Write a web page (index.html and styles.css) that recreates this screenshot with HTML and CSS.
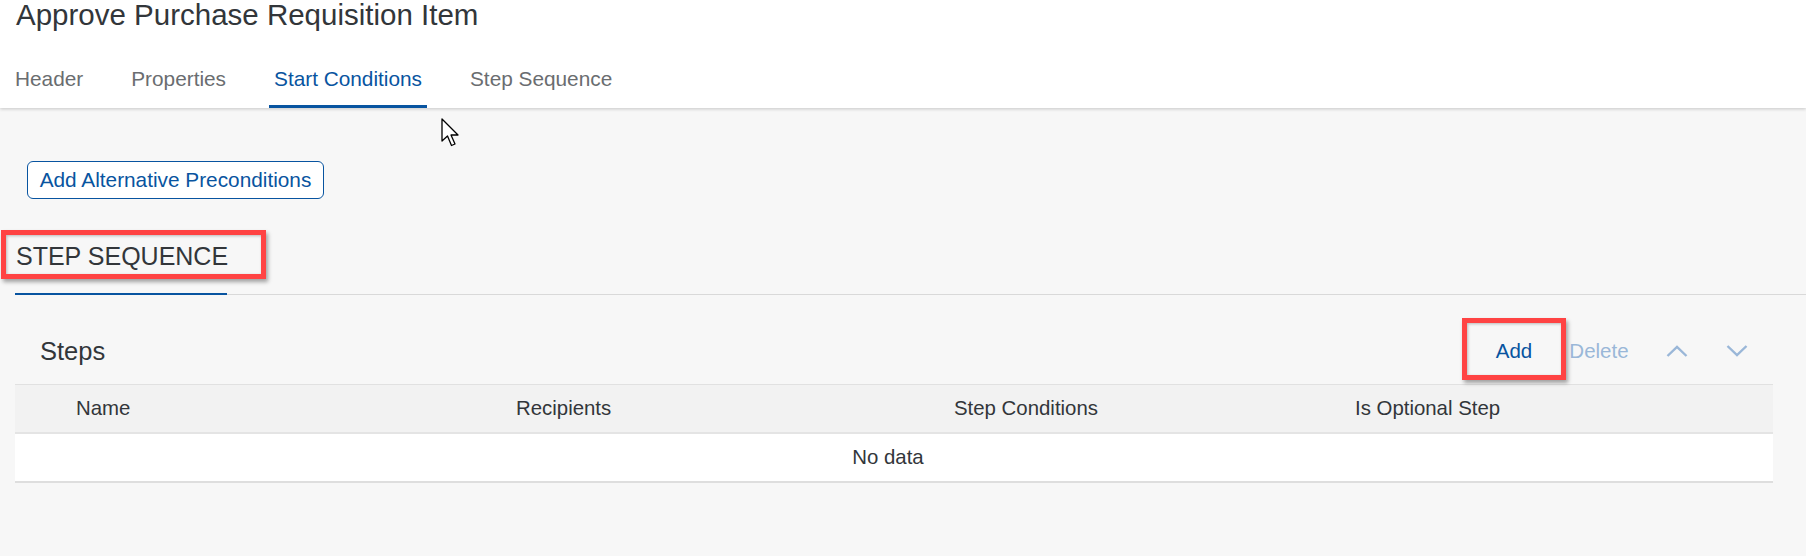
FILE: index.html
```html
<!DOCTYPE html>
<html lang="en">
<head>
<meta charset="utf-8">
<title>Approve Purchase Requisition Item</title>
<link rel="stylesheet" href="styles.css">
</head>
<body>
<header class="page-header">
  <h1 class="page-title">Approve Purchase Requisition Item</h1>
  <nav class="tabs">
    <a class="tab">Header</a>
    <a class="tab">Properties</a>
    <a class="tab tab-selected">Start Conditions</a>
    <a class="tab">Step Sequence</a>
  </nav>
</header>

<main class="content">
  <div class="action-row">
    <button class="btn-outline">Add Alternative Preconditions</button>
  </div>

  <div class="section-head">
    <h2 class="section-title">STEP SEQUENCE<span class="annot annot-title"></span></h2>
  </div>

  <div class="steps">
    <div class="toolbar">
      <div class="toolbar-title">Steps</div>
      <div class="toolbar-actions">
        <button class="tb-btn tb-add">Add<span class="annot annot-add"></span></button>
        <button class="tb-btn tb-delete">Delete</button>
        <button class="tb-btn tb-icon tb-up" aria-label="Move up">
          <svg width="22" height="12" viewBox="0 0 22 12"><path d="M1.5 11 L11 2 L20.5 11" fill="none" stroke="currentColor" stroke-width="2.4"/></svg>
        </button>
        <button class="tb-btn tb-icon tb-down" aria-label="Move down">
          <svg width="22" height="12" viewBox="0 0 22 12"><path d="M1.5 1 L11 10 L20.5 1" fill="none" stroke="currentColor" stroke-width="2.4"/></svg>
        </button>
      </div>
    </div>

    <div class="table">
      <div class="tr thead">
        <div class="td td-sel"></div>
        <div class="td">Name</div>
        <div class="td">Recipients</div>
        <div class="td">Step Conditions</div>
        <div class="td">Is Optional Step</div>
      </div>
      <div class="tr tempty">No data</div>
    </div>
  </div>
</main>

<svg class="cursor" width="20" height="30" viewBox="0 0 20 30">
  <path d="M1 1 L1 23 L6.5 18 L10.5 27.5 L14 26 L10 17 L17 17 Z" fill="#fff" stroke="#000" stroke-width="1.3" stroke-linejoin="round"/>
</svg>
</body>
</html>
```

FILE: styles.css
```css
* { box-sizing: border-box; }

html, body {
  margin: 0;
  padding: 0;
}

body {
  background: #f7f7f7;
  font-family: "Liberation Sans", Arial, sans-serif;
  color: #32363a;
  width: 1806px;
  height: 556px;
  overflow: hidden;
  position: relative;
}

.page-header {
  background: #ffffff;
  height: 108px;
  box-shadow: 0 1px 3px rgba(0, 0, 0, 0.12), 0 2px 3px rgba(0, 0, 0, 0.06);
  position: relative;
  z-index: 1;
}

.page-title {
  margin: 0;
  padding-left: 16px;
  height: 30px;
  line-height: 30px;
  font-size: 29.5px;
  font-weight: normal;
  color: #32363a;
}

.tabs {
  margin-top: 22px;
  display: flex;
  gap: 38px;
  padding-left: 10px;
  height: 56px;
}

.tab {
  display: flex;
  align-items: center;
  height: 56px;
  padding: 0 5px;
  border-bottom: 3px solid transparent;
  font-size: 20.8px;
  color: #6a6d70;
}

.tab-selected {
  color: #0854a0;
  border-bottom-color: #0854a0;
}

.content {
  padding-left: 15px;
}

.action-row {
  padding-top: 53px;
  padding-left: 12px;
}

.btn-outline {
  height: 38px;
  width: 297px;
  padding: 0 8px;
  background: #ffffff;
  border: 1px solid #0854a0;
  border-radius: 6px;
  color: #0854a0;
  font-family: "Liberation Sans", Arial, sans-serif;
  font-size: 20.8px;
  line-height: 36px;
  white-space: nowrap;
}

.section-head {
  margin-top: 42px;
  border-bottom: 1px solid #d9d9d9;
  height: 54px;
}

.section-title {
  position: relative;
  display: inline-block;
  margin: 0;
  padding-left: 1px;
  padding-bottom: 22px;
  height: 54px;
  line-height: 30px;
  font-size: 25px;
  font-weight: normal;
  color: #32363a;
  border-bottom: 2px solid #0854a0;
  width: 212px;
  white-space: nowrap;
}

.annot {
  position: absolute;
  border: 5px solid #ff4343;
  box-shadow: 2px 3px 4px rgba(0, 0, 0, 0.35), inset 1px 1px 3px rgba(0, 0, 0, 0.25);
  pointer-events: none;
}

.annot-title {
  left: -14px;
  top: -11px;
  width: 265px;
  height: 49px;
}

.steps {
  margin-right: 33px;
}

.toolbar {
  margin-top: 33px;
  margin-bottom: 10px;
  height: 46px;
  display: flex;
  align-items: center;
  justify-content: space-between;
  padding-left: 25px;
  padding-right: 16px;
}

.toolbar-title {
  font-size: 25.5px;
  color: #32363a;
}

.toolbar-actions {
  display: flex;
  align-items: center;
  height: 46px;
}

.tb-btn {
  position: relative;
  height: 46px;
  border: none;
  background: transparent;
  font-family: "Liberation Sans", Arial, sans-serif;
  font-size: 20.5px;
  color: #0854a0;
  padding: 0;
  display: flex;
  align-items: center;
  justify-content: center;
}

.tb-add {
  width: 72px;
  margin-right: 10px;
}

.annot-add {
  left: -16px;
  top: -10px;
  width: 104px;
  height: 62px;
}

.tb-delete {
  width: 78px;
  margin-right: 19px;
  color: #9ab7d8;
}

.tb-icon {
  width: 40px;
  color: #9ab7d8;
}

.tb-up {
  margin-right: 20px;
}

.table {
  background: #ffffff;
}

.tr {
  display: grid;
  grid-template-columns: 45px 440px 438px 401px 1fr;
}

.thead {
  height: 50px;
  background: #f2f2f2;
  border-top: 1px solid #e1e1e1;
  border-bottom: 2px solid #e4e4e4;
  align-items: center;
}

.td {
  padding-left: 16px;
  font-size: 20.4px;
  color: #32363a;
  white-space: nowrap;
}

.td-sel {
  padding: 0;
}

.tempty {
  display: flex;
  align-items: center;
  justify-content: center;
  height: 49px;
  border-bottom: 2px solid #dedede;
  font-size: 20.4px;
  color: #32363a;
  padding-right: 12px;
}

.cursor {
  position: absolute;
  left: 441px;
  top: 118px;
}
```
